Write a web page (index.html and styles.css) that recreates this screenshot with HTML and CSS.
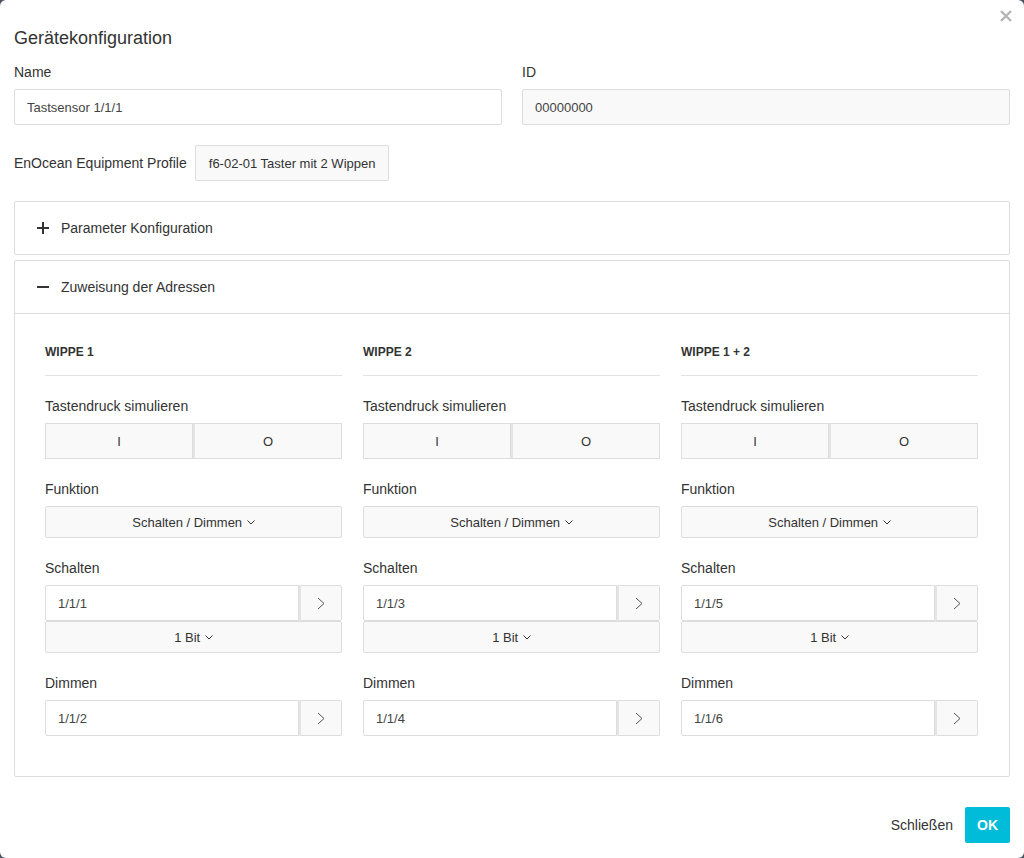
FILE: index.html
```html
<!DOCTYPE html>
<html lang="de">
<head>
    <meta charset="utf-8">
    <meta name="viewport" content="width=device-width, initial-scale=1">
    <link rel="stylesheet" href="styles.css">
</head>
<body>

<div class="modal">
    <button class="close-btn" title="Schließen">
        <svg width="12" height="12" viewBox="0 0 12 12"><path d="M1 1L11 11M11 1L1 11" stroke="#b5b5b5" stroke-width="2.4"/></svg>
    </button>

    <div class="modal-header">
        <h4 class="modal-title">Gerätekonfiguration</h4>
    </div>

    <div class="modal-body">
        <div class="row-2">
            <div class="form-group">
                <label>Name</label>
                <input type="text" class="form-control" value="Tastsensor 1/1/1">
            </div>
            <div class="form-group">
                <label>ID</label>
                <input type="text" class="form-control" value="00000000" readonly>
            </div>
        </div>

        <div class="form-group profile">
            <span class="profile-label">EnOcean Equipment Profile</span>
            <button class="btn">f6-02-01 Taster mit 2 Wippen</button>
        </div>

        <div class="panel">
            <div class="panel-heading">
                <svg class="toggle" width="12" height="12" viewBox="0 0 12 12"><path d="M0 6H12M6 0V12" stroke="#333" stroke-width="2"/></svg>
                Parameter Konfiguration
            </div>
        </div>

        <div class="panel">
            <div class="panel-heading open">
                <svg class="toggle" width="12" height="12" viewBox="0 0 12 12"><path d="M0 6H12" stroke="#333" stroke-width="2"/></svg>
                Zuweisung der Adressen
            </div>
            <div class="panel-body" id="rockers"></div>
        </div>
    </div>

    <div class="modal-footer">
        <button class="btn-link">Schließen</button>
        <button class="btn-ok">OK</button>
    </div>
</div>

<script>
    // Rocker columns with their group addresses
    var rockers = [
        { title: "WIPPE 1", switchAddr: "1/1/1", dimAddr: "1/1/2" },
        { title: "WIPPE 2", switchAddr: "1/1/3", dimAddr: "1/1/4" },
        { title: "WIPPE 1 + 2", switchAddr: "1/1/5", dimAddr: "1/1/6" }
    ];

    var caret = '<svg class="caret" width="8" height="5" viewBox="0 0 8 5"><path d="M0.5 0.5L4 4L7.5 0.5" fill="none" stroke="#333" stroke-width="1"/></svg>';
    var arrow = '<svg width="8" height="13" viewBox="0 0 8 13"><path d="M1 1L7 6.5L1 12" fill="none" stroke="#555" stroke-width="1"/></svg>';

    function addressGroup(value) {
        return '<div class="input-group">' +
            '<input type="text" class="form-control" value="' + value + '">' +
            '<button class="addon">' + arrow + '</button>' +
            '</div>';
    }

    function buildColumn(r) {
        return '<div class="rocker">' +
            '<h5 class="rocker-title">' + r.title + '</h5>' +
            '<div class="form-group"><label>Tastendruck simulieren</label>' +
            '<div class="btn-group"><button class="btn">I</button><button class="btn">O</button></div></div>' +
            '<div class="form-group"><label>Funktion</label>' +
            '<button class="btn btn-block">Schalten / Dimmen ' + caret + '</button></div>' +
            '<div class="form-group"><label>Schalten</label>' + addressGroup(r.switchAddr) +
            '<button class="btn btn-block">1 Bit ' + caret + '</button></div>' +
            '<div class="form-group"><label>Dimmen</label>' + addressGroup(r.dimAddr) + '</div>' +
            '</div>';
    }

    document.getElementById("rockers").innerHTML = rockers.map(buildColumn).join("");
</script>

</body>
</html>
```

FILE: styles.css
```css
* {
    box-sizing: border-box;
}

body {
    margin: 0;
    background-color: #4a5560;
    font-family: "Liberation Sans", Arial, sans-serif;
    font-size: 14px;
    color: #333;
}

/* Dialog */
.modal {
    position: relative;
    width: 1024px;
    height: 858px;
    background: #fff;
    border-radius: 6px;
}

.close-btn {
    position: absolute;
    top: 10px;
    right: 12px;
    padding: 0;
    border: none;
    background: none;
    cursor: pointer;
}

.modal-header {
    padding: 25px 14px 0;
}

.modal-title {
    margin: 0;
    font-size: 18px;
    font-weight: normal;
    line-height: 26px;
    color: #333;
}

.modal-body {
    padding: 11px 14px 0;
}

.row-2 {
    display: grid;
    grid-template-columns: 488px 488px;
    gap: 20px;
}

.form-group {
    margin-bottom: 20px;
}

label {
    display: block;
    line-height: 20px;
    margin-bottom: 7px;
}

.form-control {
    display: block;
    width: 100%;
    height: 36px;
    padding: 6px 12px;
    font-family: inherit;
    font-size: 13px;
    color: #444;
    background: #fff;
    border: 1px solid #ddd;
    border-radius: 2px;
    outline: none;
}

.form-control[readonly] {
    background: #f9f9f9;
}

/* Buttons */
.btn {
    height: 36px;
    padding: 0 12px;
    font-family: inherit;
    font-size: 13px;
    color: #333;
    background: #f9f9f9;
    border: 1px solid #ddd;
    border-radius: 2px;
    cursor: pointer;
}

.btn-block {
    display: block;
    width: 100%;
    height: 32px;
}

.caret {
    margin-left: 1px;
    vertical-align: 2px;
}

.profile {
    display: flex;
    align-items: center;
    gap: 8px;
}

.profile .btn {
    padding: 0 13px;
}

.btn-group {
    display: flex;
}

.btn-group .btn {
    flex: 1;
    border-radius: 0;
}

.btn-group .btn + .btn {
    border-left: 2px solid #e4e4e4;
}

/* Collapsible panels */
.panel {
    border: 1px solid #ddd;
    border-radius: 2px;
    margin-bottom: 5px;
}

.panel-heading {
    display: flex;
    align-items: center;
    height: 52px;
    padding: 0 22px;
    font-size: 14px;
}

.panel-heading.open {
    border-bottom: 1px solid #ddd;
    height: 53px;
}

.toggle {
    margin-right: 12px;
}

.panel-body {
    display: grid;
    grid-template-columns: repeat(3, 297px);
    gap: 21px;
    padding: 30px 30px 20px;
}

.rocker-title {
    margin: 0 0 20px;
    font-size: 12px;
    font-weight: bold;
    line-height: 17px;
    color: #333;
}

.rocker-title::after {
    content: "";
    display: block;
    margin-top: 14px;
    border-bottom: 1px solid #e2e2e2;
}

.input-group {
    display: flex;
}

.input-group .form-control {
    flex: 1;
    border-radius: 2px 0 0 2px;
}

.addon {
    width: 43px;
    height: 36px;
    background: #f9f9f9;
    border: 1px solid #ddd;
    border-left: 2px solid #e4e4e4;
    border-radius: 0 2px 2px 0;
    padding: 0;
    display: flex;
    align-items: center;
    justify-content: center;
    cursor: pointer;
}

/* Footer */
.modal-footer {
    display: flex;
    justify-content: flex-end;
    align-items: center;
    padding: 25px 14px 0;
}

.btn-link {
    background: none;
    border: none;
    font-family: inherit;
    font-size: 14px;
    color: #333;
    padding: 0 12px 0 0;
    cursor: pointer;
}

.btn-ok {
    width: 45px;
    height: 36px;
    background: #00bcd9;
    border: none;
    border-radius: 2px;
    color: #fff;
    font-family: inherit;
    font-size: 14px;
    font-weight: bold;
    cursor: pointer;
}
```
